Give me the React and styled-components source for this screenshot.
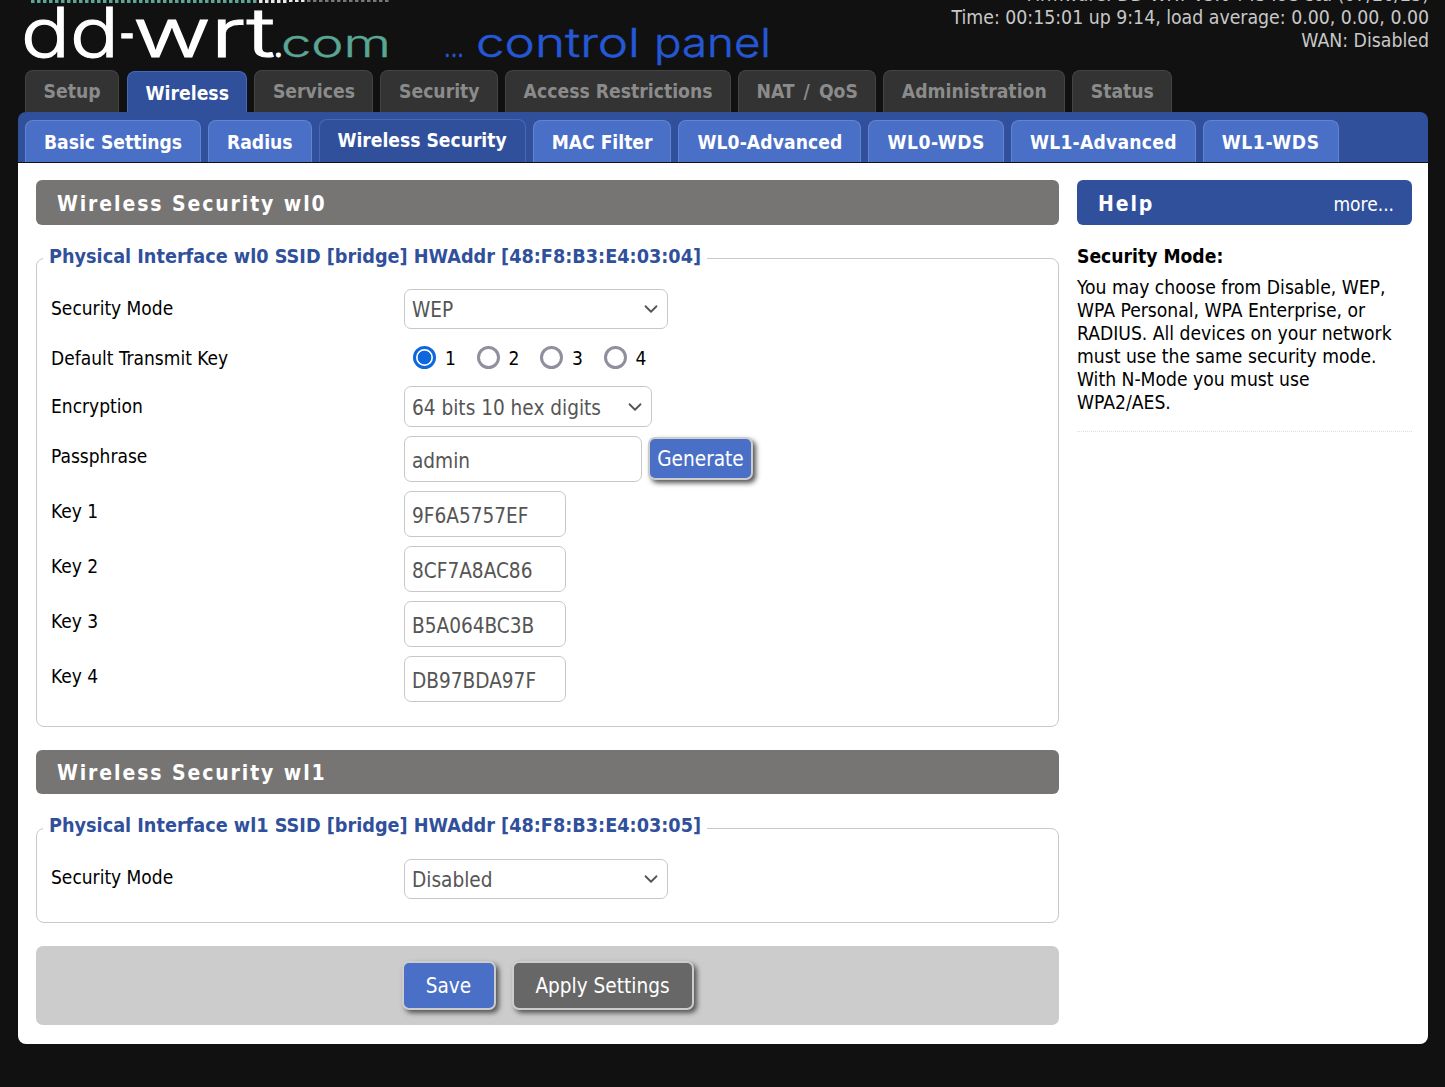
import React from "react";
import styled, { createGlobalStyle } from "styled-components";
import { ChevronDown } from "lucide-react";

const GlobalStyle = createGlobalStyle`
  html, body {
    margin: 0;
    padding: 0;
    background: #111111;
    overflow: hidden;
    font-family: "DejaVu Sans", Tahoma, sans-serif;
    font-stretch: condensed;
  }
`;

// Styled Components
const Page = styled.div`
  width: 1445px;
  height: 1087px;
  overflow: hidden;
`;

const Header = styled.header`
  display: flex;
  justify-content: space-between;
  height: 69px;
  padding: 0 16px 0 23px;
  box-sizing: border-box;
  overflow: hidden;
`;

const StatusBox = styled.div`
  margin-top: -17px;
  text-align: right;
  color: #c8c8c8;
  font-size: 19.3px;
  line-height: 23px;
  white-space: nowrap;
`;

const Shell = styled.div`
  width: 1410px;
  margin-left: 18px;
`;

const MainTabs = styled.nav`
  display: flex;
  align-items: flex-end;
  gap: 7px;
  height: 43px;
  padding-left: 7px;
`;

const MainTab = styled.div`
  box-sizing: border-box;
  height: ${(p) => (p.$active ? "41px" : "42px")};
  margin-left: ${(p) => (p.$active ? "1px" : "0")};
  padding: ${(p) => (p.$active ? "10px 17.5px 0" : "0 17.5px")};
  line-height: ${(p) => (p.$active ? "24px" : "41px")};
  border: 1px solid ${(p) => (p.$active ? "#4668bb" : "#444444")};
  border-bottom: none;
  border-radius: 8px 8px 0 0;
  background: ${(p) => (p.$active ? "#30509c" : "#333333")};
  color: ${(p) => (p.$active ? "#ffffff" : "#8b8b8b")};
  font-size: 19.2px;
  font-weight: 700;
  word-spacing: ${(p) => p.$wordGap || 0}px;
  white-space: nowrap;
`;

const SubBar = styled.nav`
  display: flex;
  align-items: flex-end;
  gap: 7px;
  height: 50px;
  padding-left: 7px;
  background: #30509c;
  border-radius: 8px 8px 0 0;
  border-bottom: 1px solid #111111;
`;

const SubTab = styled.div`
  box-sizing: border-box;
  height: ${(p) => (p.$active ? "43px" : "42px")};
  padding: 0 18px;
  line-height: ${(p) => (p.$active ? "41px" : "43px")};
  border: 1px solid ${(p) => (p.$active ? "#4668bb" : "#6384d0")};
  border-bottom: none;
  border-radius: 8px 8px 0 0;
  background: ${(p) => (p.$active ? "#30509c" : "#4a6fc7")};
  color: #ffffff;
  font-size: 19.1px;
  font-weight: 700;
  letter-spacing: ${(p) => p.$spacing || 0}px;
  white-space: nowrap;
`;

const Content = styled.main`
  display: grid;
  grid-template-columns: 1023px 335px;
  column-gap: 18px;
  height: 881px;
  box-sizing: border-box;
  padding: 17px 16px 0 18px;
  background: #ffffff;
  border-radius: 0 0 8px 8px;
`;

const Column = styled.section`
  display: flex;
  flex-direction: column;
`;

const SectionTitle = styled.h2`
  margin: ${(p) => p.$top || 0}px 0 0;
  height: ${(p) => p.$height || 45}px;
  line-height: ${(p) => (p.$height || 45) + 3}px;
  padding-left: 21px;
  border-radius: 6px;
  background: #777573;
  color: #ffffff;
  font-size: 21px;
  font-weight: 700;
  letter-spacing: 1.9px;
`;

const Fieldset = styled.div`
  position: relative;
  box-sizing: border-box;
  margin-top: ${(p) => p.$top}px;
  height: ${(p) => p.$height}px;
  padding: ${(p) => p.$pad}px 14px 0;
  border: 1px solid #c9c9c9;
  border-radius: 8px;
`;

const Legend = styled.div`
  position: absolute;
  top: ${(p) => p.$top}px;
  left: 6px;
  padding: 0 6px;
  background: #ffffff;
  color: #30509c;
  font-size: 19.67px;
  line-height: 24px;
  font-weight: 700;
  white-space: nowrap;
`;

const Row = styled.div`
  display: flex;
  align-items: center;
  height: ${(p) => p.$height}px;
  margin-top: ${(p) => p.$gap || 0}px;
`;

const Label = styled.div`
  flex: 0 0 353px;
  margin-top: ${(p) => p.$nudge || 0}px;
  color: #000000;
  font-size: 19px;
`;

const SelectWrap = styled.div`
  position: relative;
  width: ${(p) => p.$width}px;
  height: ${(p) => p.$height}px;
`;

const Select = styled.select`
  appearance: none;
  width: 100%;
  height: 100%;
  padding: 2px 0 0 7px;
  border: 1px solid #c8c8c8;
  border-radius: 7px;
  background: #ffffff;
  color: #555555;
  font-family: inherit;
  font-stretch: inherit;
  font-size: 20.6px;
  box-sizing: border-box;
`;

const Chevron = styled(ChevronDown)`
  position: absolute;
  top: 50%;
  right: 6px;
  transform: translateY(-50%);
  width: 22px;
  height: 22px;
  color: #555555;
  pointer-events: none;
`;

const TextInput = styled.input`
  box-sizing: border-box;
  width: ${(p) => p.$width}px;
  height: 46px;
  padding: 4px 7px 0;
  border: 1px solid #c8c8c8;
  border-radius: 7px;
  color: #555555;
  font-family: inherit;
  font-stretch: inherit;
  font-size: 20.6px;
`;

const RadioGroup = styled.div`
  display: flex;
  padding-left: 9px;
`;

const RadioLabel = styled.label`
  display: flex;
  align-items: center;
  width: 63.5px;
  color: #000000;
  font-size: 19px;
`;

const Radio = styled.input`
  appearance: none;
  box-sizing: border-box;
  width: 23px;
  height: 23px;
  margin: 0 9px 0 0;
  border: 3px solid #8f8f9d;
  border-radius: 50%;
  background: #ffffff;

  &:checked {
    border-color: #0f67e0;
    background: radial-gradient(circle, #0f67e0 0 6.5px, #ffffff 7.2px);
  }
`;

const Button = styled.button`
  box-sizing: border-box;
  width: ${(p) => p.$width}px;
  height: ${(p) => p.$height}px;
  padding: 1px 0 0;
  border: 2px solid #cccccc;
  border-radius: 7px;
  background: ${(p) => (p.$dark ? "#676767" : "#4a6fc7")};
  box-shadow: 3px 3px 5px #555555;
  color: #ffffff;
  font-family: inherit;
  font-stretch: inherit;
  font-size: 20.6px;
`;

const GenerateButton = styled(Button)`
  margin-left: 6px;
`;

const ButtonBar = styled.div`
  display: flex;
  justify-content: center;
  align-items: center;
  gap: 16px;
  margin-top: 23px;
  height: 79px;
  border-radius: 7px;
  background: #cccccc;
`;

const HelpHead = styled.div`
  display: flex;
  justify-content: space-between;
  align-items: center;
  height: 45px;
  box-sizing: border-box;
  padding: 3px 18px 0 21px;
  border-radius: 6px;
  background: #30509c;
  color: #ffffff;
`;

const HelpTitle = styled.span`
  font-size: 21px;
  font-weight: 700;
  letter-spacing: 1.9px;
`;

const HelpMore = styled.span`
  font-size: 19px;
`;

const HelpBody = styled.div`
  padding: 20px 0 17px;
  border-bottom: 1px dotted #dddddd;
  color: #000000;
  font-size: 19.15px;
  line-height: 23px;
`;

const HelpHeading = styled.div`
  margin-bottom: 8px;
  font-weight: 700;
`;

const HelpText = styled.div`
  padding-right: 8px;
`;

const mainTabs = [
  { label: "Setup" },
  { label: "Wireless", active: true },
  { label: "Services" },
  { label: "Security" },
  { label: "Access Restrictions" },
  { label: "NAT / QoS", wordGap: 3 },
  { label: "Administration" },
  { label: "Status" },
];

const subTabs = [
  { label: "Basic Settings" },
  { label: "Radius" },
  { label: "Wireless Security", active: true },
  { label: "MAC Filter" },
  { label: "WL0-Advanced", spacing: 0.1 },
  { label: "WL0-WDS", spacing: 0.55 },
  { label: "WL1-Advanced", spacing: 0.25 },
  { label: "WL1-WDS", spacing: 0.6 },
];

const keys = ["9F6A5757EF", "8CF7A8AC86", "B5A064BC3B", "DB97BDA97F"];
const modes = ["Disabled", "WEP", "WPA Personal", "WPA Enterprise", "RADIUS"];

const ticks = Array.from({ length: 60 }, (_, i) => i);

function Logo() {
  const word = { y: 57, fontFamily: "Inter", fontWeight: 300, lengthAdjust: "spacingAndGlyphs" };
  return (
    <svg width="760" height="69" viewBox="0 0 760 69" role="img" aria-label="dd-wrt.com control panel">
      {ticks.map((i) => (
        <rect
          key={i}
          x={8 + i * 6}
          y="0"
          width="3.5"
          height={i > 42 ? 2 : 3}
          fill={i < 38 ? "#5aa593" : i < 46 ? "#e8e8e8" : "#777777"}
        />
      ))}
      <g fill="#ffffff" stroke="#ffffff" strokeWidth="1.1" fontSize="68">
        <text {...word} x="-2" textLength="98">dd</text>
        <text {...word} x="96" textLength="16">-</text>
        <text {...word} x="110" textLength="142">wrt</text>
      </g>
      <text {...word} x="250" fontSize="38" fill="#ffffff" stroke="#ffffff" strokeWidth="0.8">.</text>
      <text {...word} x="258" fontSize="38" fill="#5aa593" stroke="#5aa593" strokeWidth="0.4" textLength="110">com</text>
      <g fill="#2458d6" stroke="#2458d6" strokeWidth="0.5" fontSize="40">
        <text {...word} x="421" fontSize="30" textLength="20">...</text>
        <text {...word} x="453" textLength="164">control</text>
        <text {...word} x="631" textLength="117">panel</text>
      </g>
    </svg>
  );
}

function SelectField({ width, value, options }) {
  return (
    <SelectWrap $width={width} $height={width === 248 ? 41 : 40}>
      <Select defaultValue={value}>
        {options.map((o) => (
          <option key={o}>{o}</option>
        ))}
      </Select>
      <Chevron strokeWidth={2} />
    </SelectWrap>
  );
}

export default function App() {
  return (
    <Page>
      <GlobalStyle />
      <Header>
        <Logo />
        <StatusBox>
          <div>Firmware: DD-WRT v3.0-r45493 std (07/20/25)</div>
          <div>Time: 00:15:01 up 9:14, load average: 0.00, 0.00, 0.00</div>
          <div>WAN: Disabled</div>
        </StatusBox>
      </Header>
      <Shell>
        <MainTabs>
          {mainTabs.map((t) => (
            <MainTab key={t.label} $active={t.active} $wordGap={t.wordGap}>{t.label}</MainTab>
          ))}
        </MainTabs>
        <SubBar>
          {subTabs.map((t) => (
            <SubTab key={t.label} $active={t.active} $spacing={t.spacing}>{t.label}</SubTab>
          ))}
        </SubBar>
        <Content>
          <Column>
            <SectionTitle>Wireless Security wl0</SectionTitle>
            <Fieldset $top={33} $height={469} $pad={30}>
              <Legend $top={-14}>Physical Interface wl0 SSID [bridge] HWAddr [48:F8:B3:E4:03:04]</Legend>
              <Row $height={40}>
                <Label $nudge={-2}>Security Mode</Label>
                <SelectField width={264} value="WEP" options={modes} />
              </Row>
              <Row $height={57}>
                <Label>Default Transmit Key</Label>
                <RadioGroup>
                  {[1, 2, 3, 4].map((n) => (
                    <RadioLabel key={n}>
                      <Radio type="radio" name="txkey" defaultChecked={n === 1} />
                      {n}
                    </RadioLabel>
                  ))}
                </RadioGroup>
              </Row>
              <Row $height={41}>
                <Label $nudge={-2}>Encryption</Label>
                <SelectField width={248} value="64 bits 10 hex digits" options={["64 bits 10 hex digits", "128 bits 26 hex digits"]} />
              </Row>
              <Row $height={55} $gap={4}>
                <Label $nudge={-6}>Passphrase</Label>
                <TextInput $width={238} defaultValue="admin" />
                <GenerateButton $width={105} $height={43}>Generate</GenerateButton>
              </Row>
              {keys.map((k, i) => (
                <Row key={k} $height={55}>
                  <Label $nudge={-6}>Key {i + 1}</Label>
                  <TextInput $width={162} defaultValue={k} />
                </Row>
              ))}
            </Fieldset>
            <SectionTitle $top={23} $height={44}>Wireless Security wl1</SectionTitle>
            <Fieldset $top={34} $height={95} $pad={30}>
              <Legend $top={-15}>Physical Interface wl1 SSID [bridge] HWAddr [48:F8:B3:E4:03:05]</Legend>
              <Row $height={40}>
                <Label $nudge={-4}>Security Mode</Label>
                <SelectField width={264} value="Disabled" options={modes} />
              </Row>
            </Fieldset>
            <ButtonBar>
              <Button $width={94} $height={49}>Save</Button>
              <Button $width={182} $height={49} $dark>Apply Settings</Button>
            </ButtonBar>
          </Column>
          <Column>
            <HelpHead>
              <HelpTitle>Help</HelpTitle>
              <HelpMore>more...</HelpMore>
            </HelpHead>
            <HelpBody>
              <HelpHeading>Security Mode:</HelpHeading>
              <HelpText>
                You may choose from Disable, WEP, WPA Personal, WPA Enterprise, or RADIUS. All devices on your network must use the same security mode. With N-Mode you must use WPA2/AES.
              </HelpText>
            </HelpBody>
          </Column>
        </Content>
      </Shell>
    </Page>
  );
}
